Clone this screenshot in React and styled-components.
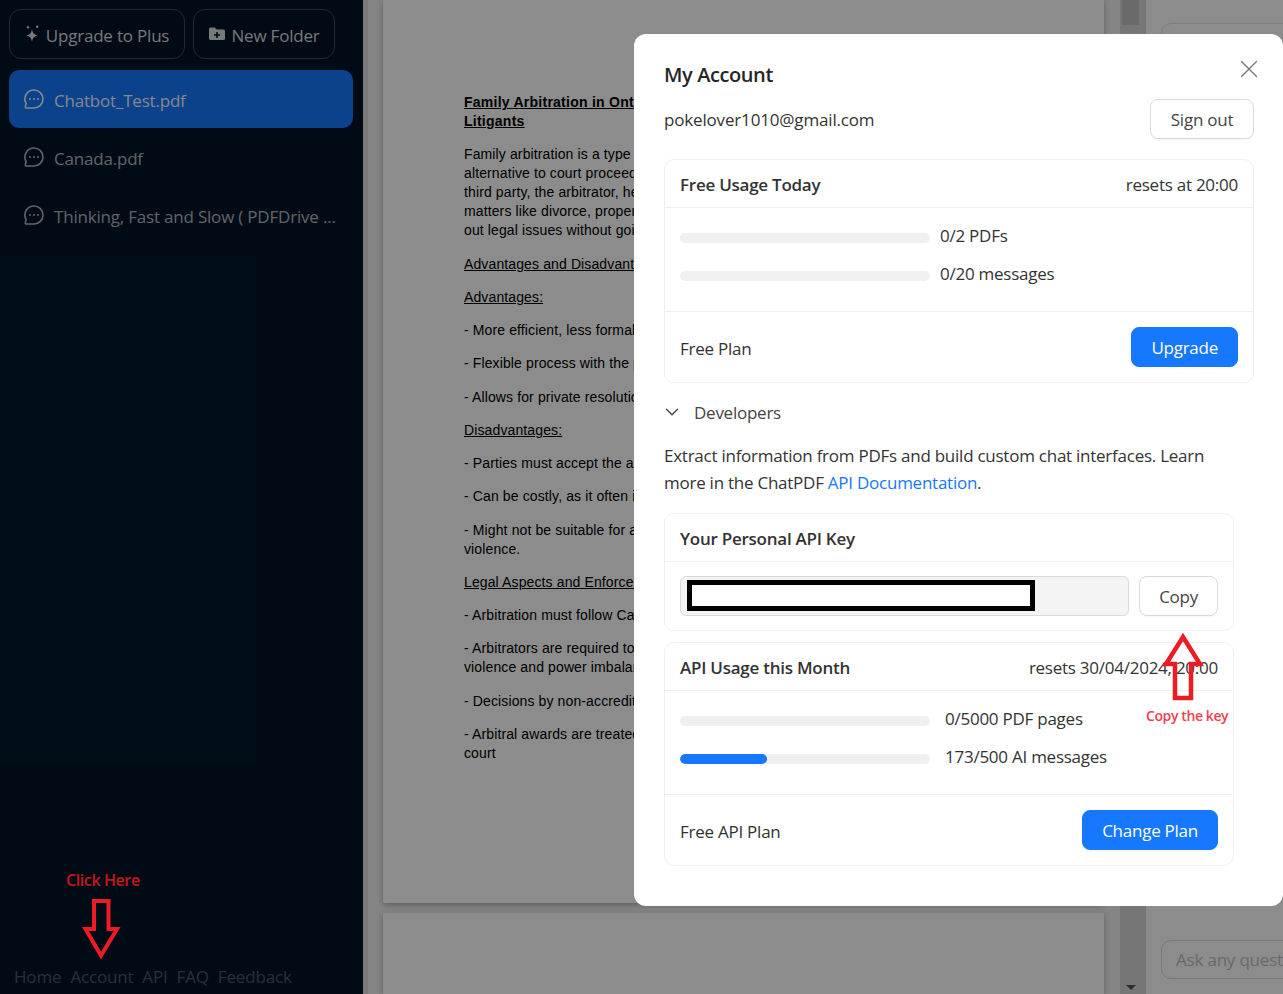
import styled, { createGlobalStyle } from 'styled-components'
import { X, ChevronDown } from 'lucide-react'

const GlobalStyle = createGlobalStyle`
  html, body {
    margin: 0;
    padding: 0;
    height: 100%;
    overflow: hidden;
    background: #fff;
  }
  * { box-sizing: border-box; }
`

const FONT = `"Open Sans", "Noto Sans", sans-serif`

const SPage = styled.div`
  position: relative;
  width: 1283px;
  height: 994px;
  overflow: hidden;
  display: flex;
  font-family: ${FONT};
`

const SSidebar = styled.aside`
  width: 363px;
  flex: none;
  background: #001529;
  padding: 9px 9px 6px;
  display: flex;
  flex-direction: column;
  color: rgba(255, 255, 255, 0.85);
`

const STopRow = styled.div`
  display: flex;
  gap: 8px;
  margin-bottom: 11px;
`

const STopButton = styled.div`
  width: ${p => p.$w}px;
  height: 50px;
  border: 1px solid #3a4a63;
  border-radius: 12px;
  display: flex;
  align-items: center;
  justify-content: center;
  gap: 5px;
  font-size: 17px;
  letter-spacing: -0.2px;
  white-space: nowrap;
`

const SButtonLabel = styled.span`
  margin-top: 3px;
`

const SDoc = styled.div`
  width: 344px;
  height: 58px;
  border-radius: 10px;
  padding: 0 15px;
  display: flex;
  align-items: center;
  gap: 10px;
  font-size: 17px;
  letter-spacing: -0.2px;
  white-space: nowrap;
  color: ${p => (p.$active ? 'rgba(255,255,255,.95)' : 'rgba(255,255,255,.7)')};
  background: ${p => (p.$active ? '#1677ff' : 'transparent')};
`

const SDocLabel = styled.span`
  margin-top: 2px;
`

const SFooter = styled.nav`
  margin-top: auto;
  margin-left: 5px;
  display: flex;
  gap: 9px;
  font-size: 17px;
  letter-spacing: -0.17px;
  color: rgba(255, 255, 255, 0.3);
`

const SViewer = styled.main`
  width: 757px;
  flex: none;
  background: #f2f2f2;
  border-left: 5px solid #dedede;
  padding-left: 15px;
  display: flex;
  flex-direction: column;
  gap: 10px;
  overflow: hidden;
`

const SSheet = styled.div`
  width: 721px;
  flex: none;
  height: 903px;
  background: #fff;
  box-shadow: 0 2px 6px rgba(0, 0, 0, 0.3);
  padding: 93px 0 0 81px;
  font-family: "Liberation Sans", Arial, sans-serif;
  font-size: 14px;
  line-height: 19px;
  letter-spacing: 0.12px;
  color: #000;
  overflow: hidden;
`

const SBlankSheet = styled.div`
  width: 721px;
  flex: none;
  height: 81px;
  background: #fff;
  box-shadow: 0 2px 6px rgba(0, 0, 0, 0.3);
`

const SPara = styled.p`
  margin: 0 0 14.25px;
  white-space: pre;
`

const SHeading = styled(SPara)`
  font-weight: 700;
  letter-spacing: 0.25px;
  text-decoration: underline;
`

const SUnder = styled(SPara)`
  text-decoration: underline;
`

const SScroll = styled.div`
  width: 26px;
  flex: none;
  background: #d7d7d7;
  position: relative;
`

const SThumb = styled.div`
  position: absolute;
  top: 0;
  left: 2px;
  width: 17px;
  height: 25px;
  background: #c1c1c1;
`

const SDownTri = styled.div`
  position: absolute;
  bottom: 4px;
  left: 6px;
  width: 0;
  height: 0;
  border-left: 5px solid transparent;
  border-right: 5px solid transparent;
  border-top: 5px solid #505050;
`

const SChat = styled.section`
  flex: 1;
  background: #fff;
  padding: 23px 0 15px 15px;
  display: flex;
  flex-direction: column;
  justify-content: space-between;
`

const STopBubble = styled.div`
  width: 200px;
  height: 20px;
  border: 1px solid #e4e4e4;
  border-radius: 12px;
`

const SAsk = styled.div`
  width: 160px;
  height: 39px;
  border: 1px solid #d9d9d9;
  border-radius: 10px;
  padding: 0 14px;
  display: flex;
  align-items: center;
  font-size: 17px;
  letter-spacing: -0.2px;
  color: #bfbfbf;
  white-space: nowrap;
  overflow: hidden;
`

const SMask = styled.div`
  position: absolute;
  inset: 0;
  background: rgba(0, 0, 0, 0.45);
`

const SModal = styled.div`
  position: absolute;
  left: 634px;
  top: 34px;
  width: 649px;
  height: 872px;
  background: #fff;
  border-radius: 12px;
  padding: 27px 29px 0 30px;
  color: #333;
  font-size: 17px;
  letter-spacing: -0.25px;
`

const SClose = styled.div`
  position: absolute;
  top: 20px;
  right: 19px;
  color: #777;
  display: flex;
`

const STitle = styled.div`
  font-size: 20px;
  font-weight: 600;
  line-height: 28px;
  letter-spacing: -0.4px;
  color: #262626;
  margin-bottom: 10px;
`

const SRow = styled.div`
  display: flex;
  justify-content: space-between;
  align-items: center;
  white-space: nowrap;
`

const SAccountRow = styled(SRow)`
  margin-bottom: 20px;
`

const SEmail = styled.span`
  letter-spacing: -0.17px;
`

const SBtn = styled.div`
  height: 40px;
  flex: none;
  min-width: ${p => p.$minW ?? 0}px;
  padding: 1px 19px 0;
  border-radius: 8px;
  border: 1px solid #d9d9d9;
  box-shadow: 0 2px 0 rgba(0, 0, 0, 0.02);
  display: flex;
  align-items: center;
  justify-content: center;
  font-size: 17px;
  color: #444;
`

const SPrimaryBtn = styled(SBtn)`
  border-color: #1677ff;
  background: #1677ff;
  color: #fff;
`

const SCard = styled.div`
  width: ${p => p.$w}px;
  border: 1px solid #f0f0f0;
  border-radius: 10px;
  margin-bottom: ${p => p.$mb ?? 0}px;
`

const SCardHead = styled(SRow)`
  height: 48px;
  padding: 1px 15px 0;
  border-bottom: 1px solid #f0f0f0;
`

const SCardTitle = styled.span`
  font-weight: 600;
  letter-spacing: -0.25px;
  color: #333;
`

const SBody = styled.div`
  padding: 8px 15px 0;
  height: 104px;
  border-bottom: 1px solid #f0f0f0;
  display: flex;
  flex-direction: column;
`

const SUsage = styled.div`
  height: 38px;
  display: flex;
  align-items: center;
  gap: ${p => p.$gap}px;
  white-space: nowrap;
`

const STrack = styled.div`
  width: 250px;
  height: 10px;
  margin-top: 5px;
  border-radius: 5px;
  background: #f0f0f0;
  overflow: hidden;
  flex: none;
`

const SFill = styled.div`
  height: 100%;
  background: #1677ff;
  border-radius: 5px;
`

const SCardFoot = styled(SRow)`
  height: 70px;
  padding: 0 15px;
`

const SFootLabel = styled.span`
  margin-top: 2px;
`

const SDevRow = styled.div`
  display: flex;
  align-items: center;
  gap: 11px;
  height: 24px;
  margin: 17px 0 18px;
  color: #444;
`

const SChevron = styled(ChevronDown)`
  margin-left: -3px;
`

const SText = styled.p`
  margin: 0 0 17px;
  line-height: 27px;
  width: 570px;
`

const SLink = styled.span`
  color: #1677ff;
`

const SKeyRow = styled.div`
  display: flex;
  gap: 10px;
  padding: 14px 15px 14px;
`

const SInput = styled.div`
  position: relative;
  flex: 1;
  height: 40px;
  background: #f4f4f4;
  border: 1px solid #d9d9d9;
  border-radius: 6px;
`

const SRedact = styled.div`
  position: absolute;
  left: 6px;
  top: 3px;
  width: 348px;
  height: 31px;
  background: #fff;
  border: 5px solid #000;
`

const SNote = styled.div`
  position: absolute;
  left: ${p => p.$x}px;
  top: ${p => p.$y}px;
  color: ${p => p.$color};
  font-size: ${p => p.$size}px;
  font-weight: 600;
  letter-spacing: -0.4px;
  white-space: nowrap;
`

const SArrow = styled.svg`
  position: absolute;
  left: ${p => p.$x}px;
  top: ${p => p.$y}px;
`

const SparkIcon = () => (
  <svg width="16" height="20" viewBox="0 0 16 20" fill="currentColor">
    <path d="M7 5 C7.6 9 9 10.6 13 11.5 C9 12.4 7.6 14 7 18 C6.4 14 5 12.4 1 11.5 C5 10.6 6.4 9 7 5 Z" />
    <path d="M3 1 C3.2 2.4 3.8 3 5 3.3 C3.8 3.6 3.2 4.2 3 5.6 C2.8 4.2 2.2 3.6 1 3.3 C2.2 3 2.8 2.4 3 1 Z" />
    <rect x="11" y="1.5" width="2.4" height="2.4" rx="1.2" />
  </svg>
)

const FolderIcon = () => (
  <svg width="18" height="16" viewBox="0 0 18 16" fill="currentColor">
    <path d="M1 3 a1.5 1.5 0 0 1 1.5 -1.5 h4.2 l2 2 h6.8 a1.5 1.5 0 0 1 1.5 1.5 v7.5 a1.5 1.5 0 0 1 -1.5 1.5 h-13 a1.5 1.5 0 0 1 -1.5 -1.5 z" />
    <path d="M8.2 6 h1.6 v2.2 h2.2 v1.6 h-2.2 v2.2 h-1.6 v-2.2 h-2.2 v-1.6 h2.2 z" fill="#001529" />
  </svg>
)

const ChatIcon = () => (
  <svg width="20" height="20" viewBox="0 0 20 20" fill="none" stroke="currentColor" strokeWidth="1.6" style={{ flex: 'none' }}>
    <path d="M10 1 A9 9 0 1 1 10 19 H2.6 C1.6 19 1 18.2 1.4 17.2 L2.2 14.6 A9 9 0 0 1 10 1 Z" strokeLinejoin="round" />
    <circle cx="6" cy="10" r="1" fill="currentColor" stroke="none" />
    <circle cx="10" cy="10" r="1" fill="currentColor" stroke="none" />
    <circle cx="14" cy="10" r="1" fill="currentColor" stroke="none" />
  </svg>
)

const docs = ['Chatbot_Test.pdf', 'Canada.pdf', 'Thinking, Fast and Slow ( PDFDrive ...']

const App = () => (
  <SPage>
    <GlobalStyle />
    <SSidebar>
      <STopRow>
        <STopButton $w={176}><SparkIcon /><SButtonLabel>Upgrade to Plus</SButtonLabel></STopButton>
        <STopButton $w={142}><FolderIcon /><SButtonLabel>New Folder</SButtonLabel></STopButton>
      </STopRow>
      {docs.map((d, i) => (
        <SDoc key={d} $active={i === 0}><ChatIcon /><SDocLabel>{d}</SDocLabel></SDoc>
      ))}
      <SFooter>
        <span>Home</span>
        <span>Account</span>
        <span>API</span>
        <span>FAQ</span>
        <span>Feedback</span>
      </SFooter>
    </SSidebar>

    <SViewer>
      <SSheet>
        <SHeading>{'Family Arbitration in Ontario: A Guide for Family Court\nLitigants'}</SHeading>
        <SPara>{'Family arbitration is a type of dispute resolution used as an\nalternative to court proceedings. A neutral\nthird party, the arbitrator, hears both sides and decides\nmatters like divorce, property and support, helping families sort\nout legal issues without going to court.'}</SPara>
        <SUnder>Advantages and Disadvantages</SUnder>
        <SUnder>Advantages:</SUnder>
        <SPara>- More efficient, less formal than court</SPara>
        <SPara>- Flexible process with the parties' input</SPara>
        <SPara>- Allows for private resolution of disputes</SPara>
        <SUnder>Disadvantages:</SUnder>
        <SPara>- Parties must accept the arbitrator's decision</SPara>
        <SPara>- Can be costly, as it often involves fees</SPara>
        <SPara>{'- Might not be suitable for all cases, such as those with\nviolence.'}</SPara>
        <SUnder>Legal Aspects and Enforcement</SUnder>
        <SPara>- Arbitration must follow Canadian law</SPara>
        <SPara>{'- Arbitrators are required to screen for\nviolence and power imbalances'}</SPara>
        <SPara>- Decisions by non-accredited arbitrators are not binding</SPara>
        <SPara>{'- Arbitral awards are treated like orders of the\ncourt'}</SPara>
      </SSheet>
      <SBlankSheet />
    </SViewer>

    <SScroll>
      <SThumb />
      <SDownTri />
    </SScroll>

    <SChat>
      <STopBubble />
      <SAsk>Ask any question</SAsk>
    </SChat>

    <SMask />

    <SModal>
      <SClose><X size={30} strokeWidth={1.1} /></SClose>
      <STitle>My Account</STitle>
      <SAccountRow>
        <SEmail>pokelover1010@gmail.com</SEmail>
        <SBtn $minW={104}>Sign out</SBtn>
      </SAccountRow>

      <SCard $w={590}>
        <SCardHead>
          <SCardTitle>Free Usage Today</SCardTitle>
          <span>resets at 20:00</span>
        </SCardHead>
        <SBody>
          <SUsage $gap={10}><STrack />0/2 PDFs</SUsage>
          <SUsage $gap={10}><STrack />0/20 messages</SUsage>
        </SBody>
        <SCardFoot>
          <SFootLabel>Free Plan</SFootLabel>
          <SPrimaryBtn>Upgrade</SPrimaryBtn>
        </SCardFoot>
      </SCard>

      <SDevRow><SChevron size={22} strokeWidth={1.5} />Developers</SDevRow>
      <SText>
        Extract information from PDFs and build custom chat interfaces. Learn more in the ChatPDF <SLink>API Documentation</SLink>.
      </SText>

      <SCard $w={570} $mb={11}>
        <SCardHead>
          <SCardTitle>Your Personal API Key</SCardTitle>
        </SCardHead>
        <SKeyRow>
          <SInput><SRedact /></SInput>
          <SBtn>Copy</SBtn>
        </SKeyRow>
      </SCard>

      <SCard $w={570}>
        <SCardHead>
          <SCardTitle>API Usage this Month</SCardTitle>
          <span>resets 30/04/2024, 20:00</span>
        </SCardHead>
        <SBody>
          <SUsage $gap={15}><STrack />0/5000 PDF pages</SUsage>
          <SUsage $gap={15}><STrack><SFill style={{ width: `${(173 / 500) * 100}%` }} /></STrack>173/500 AI messages</SUsage>
        </SBody>
        <SCardFoot>
          <SFootLabel>Free API Plan</SFootLabel>
          <SPrimaryBtn>Change Plan</SPrimaryBtn>
        </SCardFoot>
      </SCard>
    </SModal>

    <SNote $x={66} $y={869} $color="#c8161e" $size={16}>Click Here</SNote>
    <SArrow $x={82} $y={898} width="40" height="64" viewBox="0 0 40 64">
      <path d="M12 3 H26.5 V31 H35 L19 57.5 L3.5 31 H12 Z" fill="none" stroke="#ed1c24" strokeWidth="4" />
    </SArrow>
    <SNote $x={1146} $y={706} $color="#f04050" $size={14}>Copy the key</SNote>
    <SArrow $x={1160} $y={628} width="46" height="76" viewBox="0 0 46 76">
      <path d="M15 70 H31 V36 H40 L23 9 L6 36 H15 Z" fill="none" stroke="#ed1c24" strokeWidth="4.5" />
    </SArrow>
  </SPage>
)

export default App
